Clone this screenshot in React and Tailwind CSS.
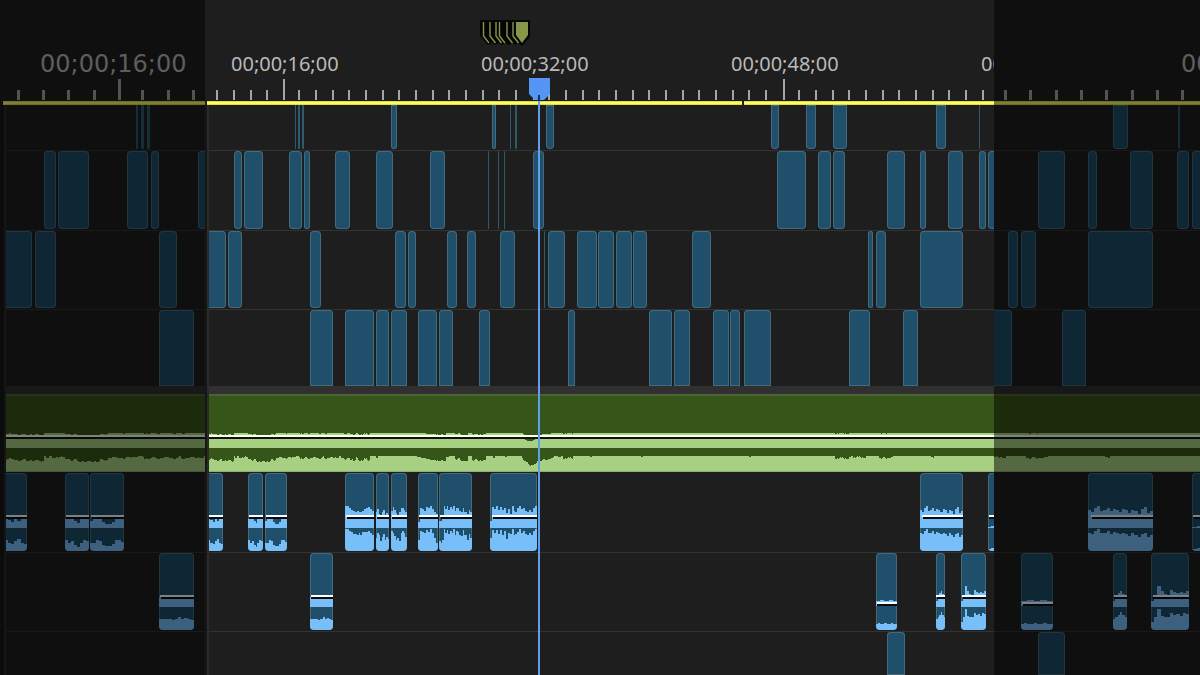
import React from "react";

const STRETCH = 1.5213;

const LABELS = [
  [231, "00;00;16;00"],
  [481, "00;00;32;00"],
  [731, "00;00;48;00"],
  [981, "00;01;04;00"],
];

const TICKS = Array.from({ length: 54 }, (_, i) => {
  const major = (i - 4) % 15 === 0;
  return { major, x: 284 + ((i - 4) * 250) / 15 - (major || i < 4 ? 0 : 1.5) };
});

// Each clip is [start, end] in timeline units.
const V4 = [
  [294.5, 296], [298, 300], [302, 304], [391, 397], [492, 496], [509.5, 511],
  [515, 517], [546, 554], [771, 779], [806, 816], [833, 847], [936, 946], [979, 980.5],
];
const V3 = [
  [234, 242], [243.5, 263.5], [288.5, 302.5], [304, 310], [335, 350.5], [376, 393],
  [430, 445.5], [488, 489.7], [498, 499.7], [504, 505.7], [533, 544.5], [777, 806],
  [817.5, 831], [833, 845], [887, 905], [920, 926], [947.5, 963], [978.5, 986.5], [988, 1005],
];
const V2 = [
  [200, 226.5], [228, 242], [309.5, 321.5], [395, 406.5], [408, 416.5], [447, 457],
  [467, 476.5], [499.5, 515.5], [544.3, 545.5], [548, 565.7], [577, 597], [598, 614],
  [616, 632], [633, 647], [691.5, 711], [867.5, 873.7], [876, 886], [920, 963],
];
const V1 = [
  [309.5, 333], [344.5, 374.5], [375.5, 389.5], [391, 407], [418, 437.7], [439, 453.5],
  [478.5, 490], [567.5, 575.5], [649, 672], [673.5, 690], [712.5, 729], [730, 740],
  [744, 771], [848.5, 870], [903, 918.7],
];

// up / low: y of the wave form's edge above the level line and in the lower channel.
const A2 = [
  { at: [200, 223], line: 42, mid: 55, up: [46, 46, 46, 46, 46, 47, 49, 46, 48, 46, 46], low: [67, 67, 67, 67, 67, 70, 71, 68, 66, 70, 71] },
  { at: [247.5, 263.5], line: 42, mid: 55, up: [46, 46, 46, 48, 50, 46, 46, 46], low: [67, 70, 68, 72, 74, 70, 67, 68] },
  { at: [264.5, 287], line: 42, mid: 55, up: [48, 46, 46, 46, 49, 51, 51, 49, 46, 46, 46], low: [70, 70, 67, 68, 72, 73, 73, 71, 67, 67, 69] },
  { at: [344.5, 374.5], line: 42, mid: 55, up: [33, 33, 35, 37, 38, 39, 38, 39, 39, 38, 36, 35, 34, 36, 38], low: [56, 56, 58, 59, 61, 61, 62, 60, 62, 59, 59, 59, 58, 60, 62] },
  { at: [375.5, 389.7], line: 42, mid: 55, up: [39, 36, 41, 42, 39, 37, 42, 40, 42], low: [65, 60, 62, 68, 64, 61, 67, 64, 66] },
  { at: [391, 407], line: 42, mid: 55, up: [38, 34, 37, 40, 42, 39, 35, 35, 37, 39], low: [58, 60, 63, 67, 65, 68, 60, 58, 60, 64] },
  { at: [418, 438], line: 42, mid: 55, up: [49, 35, 36, 38, 34, 35, 33, 36, 39, 41], low: [67, 58, 59, 60, 57, 59, 56, 60, 65, 70] },
  { at: [439, 472.7], line: 42, mid: 55, up: [48, 48, 46, 33, 36, 33, 37, 34, 36, 33, 38, 35, 35, 38, 39, 35, 39, 39, 41, 37, 39], low: [68, 70, 67, 56, 60, 57, 61, 58, 60, 56, 62, 58, 59, 62, 63, 57, 62, 62, 67, 61, 65] },
  { at: [490, 537], line: 42, mid: 55, up: [48, 34, 36, 33, 37, 34, 37, 35, 40, 36, 41, 33, 38, 39, 35, 33, 36, 35, 38, 39, 37, 39, 35, 33], low: [65, 57, 60, 57, 61, 57, 62, 58, 66, 60, 61, 56, 62, 61, 59, 56, 60, 58, 61, 62, 60, 62, 58, 56] },
  { at: [920, 963], line: 42, mid: 55, up: [37, 39, 35, 33, 38, 37, 35, 38, 36, 37, 39, 36, 37, 40, 37, 38, 41, 36, 34, 40, 38], low: [60, 61, 58, 56, 60, 60, 58, 61, 59, 60, 61, 60, 61, 63, 60, 62, 64, 61, 60, 64, 62] },
  { at: [988, 1005], line: 42, mid: 55, up: [54, 53, 54, 53, 54], low: [76, 75, 76, 75, 76] },
];
const A3 = [
  { at: [309.5, 333], line: 42, mid: 54, up: [44, 45, 44], low: [66, 66, 66, 66, 67, 66, 64, 66, 65, 66, 67] },
  { at: [876, 897], line: 49, mid: 53, up: [48, 47, 48, 47, 48], low: [71, 70, 71, 71, 70, 71, 71, 70, 71, 71] },
  { at: [936, 945.7], line: 42, mid: 54, up: [48, 45, 40, 38, 41, 44], low: [66, 64, 62, 59, 62, 64] },
  { at: [961, 986.5], line: 42, mid: 54, up: [48, 44, 33, 38, 41, 42, 37, 39, 40, 39, 40, 38], low: [69, 64, 56, 63, 64, 64, 60, 62, 61, 63, 60, 61] },
];

function stepPath(values, floor) {
  let d = `M0 ${floor}`;
  values.forEach((y, i) => {
    d += `V${y}H${i + 1}`;
  });
  return `${d}V${floor}Z`;
}

// Dips of the music track: [start, end, depth at start, depth at end, jitter].
const DIPS = [
  [209, 234, 2, 4, 3], [235, 247, 0, 0, 3], [247, 262, 1, 5, 3], [262, 276, 5, 2, 3],
  [276, 290, 1, 1, 2], [290, 300, 0, 0, 2], [300, 344, 1, 0, 3], [344, 370, 1, 2, 5],
  [376, 378, 2, 2, 0], [415, 434, 0, 4, 1], [434, 446, 4, 4, 1], [446, 449, 1, 1, 0],
  [455, 468, 1, 5, 3], [472, 486, 3, 4, 2], [493, 495, 2, 2, 0], [505, 507, 1, 1, 0],
  [522, 530, 2, 9, 1], [530, 537, 9, 7, 1], [537, 554, 4, 1, 2], [558, 561, 1, 1, 0],
  [563, 573, 1, 1, 3], [590, 592, 1, 1, 0], [641, 643, 1, 1, 0], [749, 751, 1, 1, 0],
  [835, 851, 1, 1, 3], [853, 868, 0, 0, 3], [879, 893, 1, 1, 2], [931, 934, 1, 2, 0],
];
const COLUMNS = DIPS.flatMap(([a, b, d0, d1, jitter]) => {
  const out = [];
  for (let x = a; x < b; x += 1) {
    const noise = (((x * 7919 + x * x * 31) % 17) / 17) * jitter;
    out.push([x, Math.round(d0 + ((d1 - d0) * (x - a)) / (b - a) + noise * 0.8)]);
  }
  return out;
});
const LOWER_DIPS = COLUMNS.map(([x, d]) => `M${x} 62h1v${d}h-1Z`).join("");
const UPPER_DIPS = COLUMNS.map(([x, d]) => `M${x} 38h1v${Math.min(3, Math.ceil(d / 2))}h-1Z`).join("");

const SHAPES = {
  full: "top-0 bottom-px rounded",
  top: "top-0 bottom-0 rounded-t",
  bottom: "top-0 bottom-px rounded-b",
};

function Clip({ at, view, shape = "full", children }) {
  const left = Math.round((at[0] - view.lane) * view.scale);
  const right = Math.round((at[1] - view.lane) * view.scale - 0.3);
  const width = Math.max(view.scale > 1 ? 2 : 1, right - left);
  return (
    <div
      className={`absolute overflow-hidden ${SHAPES[shape]} ${width < 4 ? "bg-[#2f5a6e]" : "bg-[#1f4f6b] inset-ring inset-ring-[#436b7c]"}`}
      style={{ left, width }}
    >
      {children}
    </div>
  );
}

function Wave({ clip }) {
  const { line, mid, up, low } = clip;
  return (
    <svg className="absolute inset-0 h-[78px] w-full" preserveAspectRatio="none" viewBox="0 0 100 78" shapeRendering="crispEdges">
      <g transform={`scale(${100 / up.length} 1)`}>
        <path d={stepPath(up, mid)} fill="#78bffa" />
      </g>
      <g transform={`scale(${100 / low.length} 1)`}>
        <path d={stepPath(low, 78)} fill="#78bffa" />
      </g>
      <rect x="4" y={line} width="96" height="2" fill="#fff" />
      <rect x="6" y={line + 2} width="94" height="2" fill="#080c12" />
    </svg>
  );
}

function Lane({ className, clips, waves, view, shape }) {
  return (
    <div className={`relative border-[#323232] ${className}`}>
      {clips?.map((at) => (
        <Clip key={at[0]} at={at} view={view} shape={shape} />
      ))}
      {waves?.map((clip) => (
        <Clip key={clip.at[0]} at={clip.at} view={view}>
          <Wave clip={clip} />
        </Clip>
      ))}
    </div>
  );
}

function Music({ view }) {
  return (
    <div className="relative h-[79px] overflow-hidden">
      <svg className="absolute top-0 h-[79px] max-w-none" style={{ left: -view.lane * view.scale, width: 1200 * view.scale }} viewBox="0 0 1200 79" preserveAspectRatio="none" shapeRendering="crispEdges">
        <rect width="1200" height="77" fill="#365619" />
        <rect width="1200" height="2" fill="#4c6336" />
        <rect y="39" width="1200" height="15" fill="#a8d083" />
        <rect y="62" width="1200" height="15" fill="#a8d083" />
        <rect y="77" width="1200" height="1" fill="#8fae72" />
        <path d={UPPER_DIPS} fill="#365619" />
        <path d={LOWER_DIPS} fill="#365619" />
        <rect y="41" width="1200" height="2" fill="#fff" />
        <rect y="43" width="1200" height="2" fill="#101408" />
        <path d="M525 45h10v1h-2v1h-6v-1h-2Z" fill="#365619" />
      </svg>
    </div>
  );
}

function Markers() {
  return (
    <svg className="absolute left-[275px] top-5 h-[26px] w-[50px]" viewBox="480 20 50 26">
      <path d="M480 20H530V37L522 46L518 43L516 45L512 43L509 45L505 43L502 45L498 43L495 45L492 43L488 45L480 36Z" fill="#050505" />
      {[483.5, 490, 496, 499.5, 507, 513].map((x) => (
        <path key={x} d={`M${x} 22V36L${x + 5.5} 43`} fill="none" stroke="#87974a" strokeWidth="1.4" />
      ))}
      <path d="M516 22H528V35L522 43L516 35Z" fill="#87974a" />
    </svg>
  );
}

function Playhead() {
  return (
    <div className="absolute bottom-0 left-[324px] top-[78px] flex w-[21px] flex-col">
      <svg className="h-[23px] w-[21px] shrink-0" viewBox="0 0 21 23">
        <path d="M0 0H21V16L15 22H6L0 16Z" fill="#5595f5" />
        <path d="M9 17h2v6h-2Z" fill="#122a66" />
      </svg>
      <div className="ml-[9px] w-[2px] flex-1 bg-[#609eee]" />
    </div>
  );
}

function Pane({ className, origin, labels, scale, gutter, wide, children }) {
  const view = { scale, lane: gutter ? 209 : origin };
  const place = (x) => Math.round((x - origin) * scale);
  return (
    <section className={`relative flex flex-col overflow-hidden bg-[#1e1e1e] ${className}`}>
      <div className="relative h-[101px] shrink-0">
        {labels.map(([x, text]) => (
          <span
            key={text}
            className={`absolute top-[52px] whitespace-nowrap text-[#b9b9b9] ${wide ? "font-['DejaVu_Sans',sans-serif] text-[24px]/6" : "font-['Noto_Sans',sans-serif] text-[20px]/6"}`}
            style={{ left: place(x) }}
          >
            {text}
          </span>
        ))}
        {TICKS.map((tick) => (
          <span
            key={tick.x}
            className={`absolute bottom-px bg-[#a6a6a6] ${tick.major ? "h-[21px]" : "h-[10px]"} ${wide ? "w-[3px]" : "w-[2px]"}`}
            style={{ left: place(tick.x) - (wide ? 2 : 1) }}
          />
        ))}
      </div>
      <div className={`flex h-1 shrink-0 ${gutter ? (wide ? "pl-[3px]" : "pl-[2px]") : ""}`}>
        {wide || (
          <>
            <div className="w-[535px] border-y border-[#dede4c] bg-[#ffff5c]" />
            <div className="w-[2px] bg-[#1e1e1e]" />
          </>
        )}
        <div className="flex-1 border-y border-[#dede4c] bg-[#ffff5c]" />
      </div>
      <div className="flex flex-1">
        {gutter && (
          <div className={`shrink-0 border-r-2 border-[#2b2b2b] bg-[#161616] ${wide ? "w-[6px]" : "w-1"}`} />
        )}
        <div className="flex min-w-0 flex-1 flex-col overflow-hidden">
          <Lane className="h-[46px] border-b" clips={V4} view={view} shape="bottom" />
          <Lane className="h-20 border-b" clips={V3} view={view} />
          <Lane className="h-[79px] border-b" clips={V2} view={view} />
          <Lane className="h-[76px]" clips={V1} view={view} shape="top" />
          <div className="h-2 bg-[#303030]" />
          <Music view={view} />
          <Lane className="h-20 border-b" waves={A2} view={view} />
          <Lane className="h-[79px] border-b" waves={A3} view={view} />
          <Lane className="min-h-[43px] flex-1" clips={[[887, 905]]} view={view} shape="top" />
        </div>
      </div>
      {children}
    </section>
  );
}

export default function App() {
  return (
    <main className="flex min-h-screen bg-black">
      <Pane className="w-[205px] shrink-0 opacity-50" origin={205} labels={LABELS.slice(0, 1)} scale={STRETCH} gutter wide />
      <Pane className="min-w-0 flex-1" origin={205} labels={LABELS} scale={1} gutter>
        <Markers />
        <Playhead />
      </Pane>
      <Pane className="w-[206px] shrink-0 opacity-50" origin={858} labels={LABELS.slice(3)} scale={STRETCH} wide />
    </main>
  );
}
